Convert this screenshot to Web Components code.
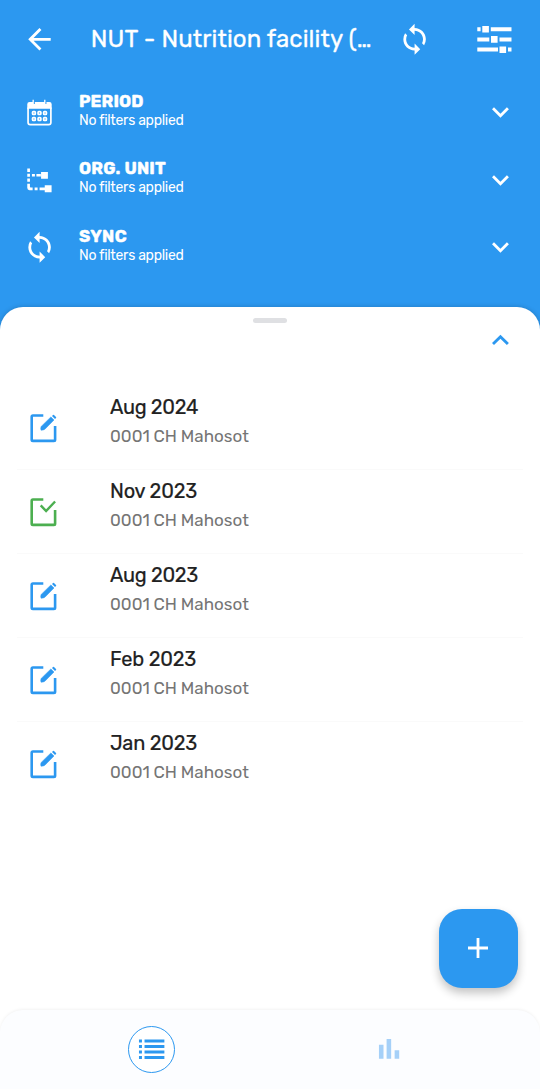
<!DOCTYPE html>
<html lang="en">
<head>
<meta charset="utf-8">
<title>NUT - Nutrition facility</title>
<style>
html,body{margin:0;height:100%;overflow:hidden}
body{font-family:Rubik,Roboto,"Liberation Sans",sans-serif;background:#2c98f0}
</style>
</head>
<body>
<dataset-screen></dataset-screen>
<script>
const ICONS = {
  back: [24, '<path d="M20 11H7.83l5.59-5.59L12 4l-8 8 8 8 1.41-1.41L7.83 13H20v-2z" transform="translate(-.3 .3)"/>'],
  sync: [24, '<path d="M12 4V1L8 5l4 4V6c3.31 0 6 2.69 6 6 0 1.01-.25 1.97-.7 2.8l1.46 1.46A7.93 7.93 0 0 0 20 12c0-4.42-3.58-8-8-8zm0 14c-3.31 0-6-2.69-6-6 0-1.01.25-1.97.7-2.8L5.24 7.74A7.93 7.93 0 0 0 4 12c0 4.42 3.58 8 8 8v3l4-4-4-4v3z" transform="translate(-.2 .3)"/>'],
  down: [24, '<path d="M16.59 8.59L12 13.17 7.41 8.59 6 10l6 6 6-6z" transform="translate(-.3 .1)"/>'],
  up: [24, '<path d="M12 8l-6 6 1.41 1.41L12 10.83l4.59 4.58L18 14z" transform="translate(-.3 .3)"/>'],
  plus: [34, '<path d="M15.6 7h2.8v8.6H27v2.8h-8.6V27h-2.8v-8.6H7v-2.8h8.6z"/>'],
  sliders: [36, '<path d="M1 7h3.3v4H1zM6 5.7h6.6v6.6H6zM14.5 7h20.7v4H14.5zM1 17.2h12v4H1zM14.7 15.9h6.6v6.6h-6.6zM23.2 17.2h12v4h-12zM1 27.4h20.7v4H1zM23.2 26.2h6.6v6.6h-6.6zM31.7 27.4h3.5v4h-3.5z" transform="translate(-.7 -.8)"/>'],
  calendar: [34, '<g transform="translate(-.4 .6)"><path d="M4.7 13.2V8.7Q4.7 6.5 7 6.5h3V4.2h1.3V8.5h1v-2h9.4V4.2H23V8.5h1v-2h3Q29.3 6.5 29.3 8.7v4.5z"/><path d="M5.5 12v15q0 2.2 2.2 2.2h18.6q2.2 0 2.2-2.2V12" fill="none" stroke="currentColor" stroke-width="1.7"/><g fill="none" stroke="currentColor" stroke-width="1.7"><rect x="10" y="16.2" width="2.8" height="2.8" rx=".7"/><rect x="15.6" y="16.2" width="2.8" height="2.8" rx=".7"/><rect x="21.2" y="16.2" width="2.8" height="2.8" rx=".7"/><rect x="10" y="22.2" width="2.8" height="2.8" rx=".7"/><rect x="15.6" y="22.2" width="2.8" height="2.8" rx=".7"/><rect x="21.2" y="22.2" width="2.8" height="2.8" rx=".7"/></g></g>'],
  tree: [34, '<path d="M4.8 5.5h2.7v3.5H4.8zM4.8 10.8h2.7v3H4.8zM4.8 15.5h2.7v3.5H4.8zM4.8 20.8h2.7v3.2q0 .7.7.7h2v2.7H7q-2.2 0-2.2-2.4zM9.5 11.2h3v2.5h-3zM14 11.2h4.5v2.5H14zM18.7 9h6.9v6.9h-6.9zM12.2 24.7h3v2.7h-3zM17.2 24.7h5.3v2.7h-5.3zM22.4 22.5h6.9v6.9h-6.9z" transform="translate(-.5 0)"/>'],
  edit: [34, '<path d="M17.3 4.5H6.9q-1.2 0-1.2 1.2v23q0 1.2 1.2 1.2h21q1.2 0 1.2-1.2V15" fill="none" stroke="currentColor" stroke-width="2.6"/><path d="M24.9 5.9L28 9 18.9 18.2Q17.8 19.1 15 19.2Q14.3 16.9 15.2 15.4z" stroke="currentColor" stroke-width=".5"/><path d="M26 4.9l1-1q.5-.4 1 0l2 2q.5.5 0 1l-1 1z"/>'],
  done: [34, '<path d="M17.3 4.5H6.9q-1.2 0-1.2 1.2v23q0 1.2 1.2 1.2h21q1.2 0 1.2-1.2V15" fill="none" stroke="currentColor" stroke-width="2.6"/><path d="M14.7 10.4l5.4 5.6 9-9.5" fill="none" stroke="currentColor" stroke-width="2.4"/>'],
  list: [34, '<path d="M4 7.5h3v3H4zM9.6 7.5h20v3h-20zM4 13.1h3v3H4zM9.6 13.1h20v3h-20zM4 18.7h3v3H4zM9.6 18.7h20v3h-20zM4 24.3h3v3H4zM9.6 24.3h20v3h-20z"/>'],
  bars: [34, '<path d="M7 12.8h4.6v14.2H7zM14.7 7h4.6v20h-4.6zM22.8 18.3h4.6V27h-4.6z"/>']
};

customElements.define('ui-icon', class extends HTMLElement {
  connectedCallback() {
    const [box, art] = ICONS[this.getAttribute('name')];
    const size = this.getAttribute('size') || 33.75;
    this.attachShadow({mode: 'open'}).innerHTML = `<style>
      :host{display:block;flex:none;width:${size}px;height:${size}px}
      svg{display:block;width:100%;height:100%;fill:currentColor;overflow:visible}
      </style><svg viewBox="0 0 ${box} ${box}">${art}</svg>`;
  }
});

/* One line of text whose tracking is adjusted to a given width. */
customElements.define('fit-text', class extends HTMLElement {
  connectedCallback() {
    this.attachShadow({mode: 'open'}).innerHTML = `<style>
      :host{display:block;white-space:nowrap}
      span{display:inline-block}
      </style><span><slot></slot></span>`;
    const span = this.shadowRoot.querySelector('span');
    const natural = span.getBoundingClientRect().width;
    const target = parseFloat(this.getAttribute('width'));
    span.style.letterSpacing = (target - natural) / this.textContent.length + 'px';
  }
});

customElements.define('top-bar', class extends HTMLElement {
  connectedCallback() {
    this.attachShadow({mode: 'open'}).innerHTML = `<style>
      :host{display:flex;align-items:center;box-sizing:border-box;height:78.5px;padding:0 27.5px 0 22.5px;color:#fff}
      fit-text{flex:1;margin-left:34.5px;font-size:24px;font-weight:400;line-height:30px;margin-top:-.5px;-webkit-text-stroke:.3px}
      .sync{margin-right:45px}
      .sliders{margin-top:-1.5px}
      </style><ui-icon name="back"></ui-icon>
      <fit-text width="281">NUT - Nutrition facility (…</fit-text>
      <ui-icon class="sync" name="sync"></ui-icon>
      <ui-icon class="sliders" name="sliders" size="36"></ui-icon>`;
  }
});

customElements.define('filter-row', class extends HTMLElement {
  connectedCallback() {
    this.attachShadow({mode: 'open'}).innerHTML = `<style>
      :host{display:flex;align-items:center;box-sizing:border-box;height:67.5px;padding:0 22.5px;color:#fff}
      .text{flex:1;margin:-4px 0 0 22.75px}
      .name{font-size:17px;font-weight:700;line-height:20px;-webkit-text-stroke:.4px}
      .state{font-size:14px;line-height:18px;margin-top:1px}
      </style><ui-icon name="${this.getAttribute('icon')}"></ui-icon>
      <div class="text"><fit-text class="name" width="${this.getAttribute('width')}">${this.getAttribute('name')}</fit-text>
      <fit-text class="state" width="103.5">No filters applied</fit-text></div>
      <ui-icon name="down"></ui-icon>`;
  }
});

customElements.define('report-item', class extends HTMLElement {
  connectedCallback() {
    const done = this.hasAttribute('done');
    this.attachShadow({mode: 'open'}).innerHTML = `<style>
      :host{display:flex;box-sizing:border-box;height:84px;margin:0 17px;padding:9px 0 0 9px;border-bottom:1px solid #fafafa}
      :host(:last-of-type){border-color:transparent}
      ui-icon{margin-top:16px;color:${done ? '#4caf50' : '#2c98f0'}}
      .text{margin-left:50px}
      .date{font-size:20px;font-weight:400;line-height:24px;color:#212121;-webkit-text-stroke:.2px}
      .unit{font-size:17px;line-height:20px;margin-top:7px;color:#757575;word-spacing:-.6px}
      </style><ui-icon name="${done ? 'done' : 'edit'}" size="34"></ui-icon>
      <div class="text"><fit-text class="date" width="${this.getAttribute('width')}">${this.getAttribute('date')}</fit-text>
      <fit-text class="unit" width="139">0001 CH Mahosot</fit-text></div>`;
  }
});

customElements.define('bottom-nav', class extends HTMLElement {
  connectedCallback() {
    this.attachShadow({mode: 'open'}).innerHTML = `<style>
      :host{display:grid;box-sizing:border-box;grid-template-columns:237px 237px;justify-content:center;align-items:center;height:79px;padding:0 0 1px;
        background:#fcfdff;border-radius:23px 23px 0 0;box-shadow:0 -1px 3px #0000000d;color:#2c98f0}
      div{display:grid;place-items:center;width:45px;height:45px;border:1.5px solid;border-radius:50%;justify-self:center;background:#fff}
      .chart{justify-self:center;color:#a5d0f8}
      </style><div><ui-icon name="list"></ui-icon></div><ui-icon class="chart" name="bars"></ui-icon>`;
  }
});

customElements.define('dataset-screen', class extends HTMLElement {
  connectedCallback() {
    this.attachShadow({mode: 'open'}).innerHTML = `<style>
      :host{display:flex;flex-direction:column;width:540px;height:1089px;background:#2c98f0;position:relative;overflow:hidden}
      .sheet{flex:1;background:#fff;border-radius:23px 23px 0 0;box-shadow:0 0 5px #0003;margin-top:25.5px;display:flex;flex-direction:column}
      .handle{width:34px;height:5px;border-radius:3px;background:#dfe0e3;margin:11.5px auto 0}
      .up{align-self:flex-end;margin:0 22.5px 0 0;color:#2c98f0}
      .list{margin-top:28.75px;flex:1}
      .add{position:absolute;left:438.5px;top:908.5px;width:79px;height:79px;border-radius:23px;background:#2c98f0;color:#fff;
        display:grid;place-items:center;box-shadow:0 5px 10px #0000003d}
      </style>
      <top-bar></top-bar>
      <filter-row icon="calendar" name="PERIOD" width="64.5"></filter-row>
      <filter-row icon="tree" name="ORG. UNIT" width="87"></filter-row>
      <filter-row icon="sync" name="SYNC" width="48"></filter-row>
      <section class="sheet">
        <div class="handle"></div>
        <ui-icon class="up" name="up"></ui-icon>
        <div class="list">
          <report-item date="Aug 2024" width="88"></report-item>
          <report-item date="Nov 2023" width="87" done></report-item>
          <report-item date="Aug 2023" width="88"></report-item>
          <report-item date="Feb 2023" width="86"></report-item>
          <report-item date="Jan 2023" width="87"></report-item>
        </div>
        <bottom-nav></bottom-nav>
      </section>
      <div class="add"><ui-icon name="plus" size="34"></ui-icon></div>`;
  }
});
</script>
</body>
</html>
